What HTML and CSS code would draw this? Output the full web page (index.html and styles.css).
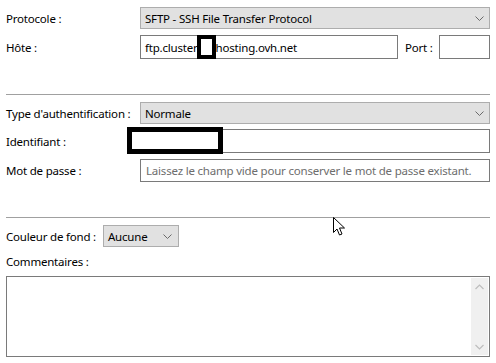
FILE: index.html
```html
<!DOCTYPE html>
<html lang="fr">

<head>
    <meta charset="UTF-8">
    <meta name="viewport" content="width=device-width, initial-scale=1.0">
    <title>Gestionnaire de Sites</title>
    <link rel="stylesheet" href="styles.css">
</head>

<body>
    <div class="panel">
        <div class="row row-proto">
            <span class="lbl">Protocole :</span>
            <div class="combo combo-wide">
                <span>SFTP - SSH File Transfer Protocol</span>
                <svg class="chev" width="9" height="5" viewBox="0 0 9 5"><path d="M0.5 0.5 L4.5 4.5 L8.5 0.5" fill="none" stroke="#6a6a6a" stroke-width="1"/></svg>
            </div>
        </div>
        <div class="row row-host">
            <span class="lbl">Hôte :</span>
            <div class="field host">ftp.cluster<span class="redact-small"></span>hosting.ovh.net</div>
            <span class="port-lbl">Port :</span>
            <div class="field port"></div>
        </div>

        <div class="sep sep-top"></div>

        <div class="row row-auth">
            <span class="lbl">Type d'authentification :</span>
            <div class="combo combo-wide">
                <span>Normale</span>
                <svg class="chev" width="9" height="5" viewBox="0 0 9 5"><path d="M0.5 0.5 L4.5 4.5 L8.5 0.5" fill="none" stroke="#6a6a6a" stroke-width="1"/></svg>
            </div>
        </div>
        <div class="row row-user">
            <span class="lbl">Identifiant :</span>
            <div class="field grow"></div>
            <div class="redact-big"></div>
        </div>
        <div class="row row-pass">
            <span class="lbl">Mot de passe :</span>
            <div class="field grow placeholder">Laissez le champ vide pour conserver le mot de passe existant.</div>
        </div>

        <div class="sep sep-bottom"></div>

        <div class="row row-color">
            <span class="lbl-short">Couleur de fond :</span>
            <div class="combo combo-small">
                <span>Aucune</span>
                <svg class="chev" width="9" height="5" viewBox="0 0 9 5"><path d="M0.5 0.5 L4.5 4.5 L8.5 0.5" fill="none" stroke="#6a6a6a" stroke-width="1"/></svg>
            </div>
        </div>
        <div class="comments-lbl">Commentaires :</div>
        <div class="comments">
            <div class="scrollbar">
                <svg width="9" height="6" viewBox="0 0 9 6"><path d="M0.5 5 L4.5 1 L8.5 5" fill="none" stroke="#bdbdbd" stroke-width="1.2"/></svg>
                <svg width="9" height="6" viewBox="0 0 9 6"><path d="M0.5 1 L4.5 5 L8.5 1" fill="none" stroke="#bdbdbd" stroke-width="1.2"/></svg>
            </div>
        </div>

        <svg class="cursor" width="13" height="20" viewBox="0 0 13 20"><path d="M0.5 0.5 L0.5 15.5 L4 12 L6.5 18 L9 17 L6.5 11 L11.5 11 Z" fill="#fff" stroke="#000" stroke-width="1"/></svg>
    </div>
</body>

</html>
```

FILE: styles.css
```css
html,
body {
    margin: 0;
    padding: 0;
    background: #fff;
}

body {
    font-family: "Noto Sans", "Open Sans", sans-serif;
    font-size: 11.5px;
    letter-spacing: -0.2px;
    color: #000;
    width: 496px;
    height: 363px;
    overflow: hidden;
}

.panel {
    position: relative;
    padding: 7px 6px 0 6px;
    width: 484px;
}

.row {
    display: flex;
    align-items: center;
}

.lbl {
    width: 134px;
    flex: none;
    white-space: nowrap;
}

.lbl-short {
    white-space: nowrap;
    margin-right: 7px;
}

.combo {
    box-sizing: border-box;
    height: 22px;
    background: #e1e1e1;
    border: 1px solid #adadad;
    display: flex;
    align-items: center;
    justify-content: space-between;
    padding: 0 5px 0 4px;
}

.combo-wide {
    flex: 1;
}

.combo-small {
    width: 76px;
    padding-right: 6px;
}

.field {
    box-sizing: border-box;
    height: 24px;
    border: 1px solid #7a7a7a;
    background: #fff;
    display: flex;
    align-items: center;
    padding: 0 4px;
    white-space: nowrap;
}

.grow {
    flex: 1;
}

.host {
    width: 258px;
}

.port-lbl {
    margin-left: 7px;
    width: 34px;
}

.port {
    width: 51px;
    margin-left: auto;
}

.placeholder {
    color: #6d6d6d;
    padding-left: 5px;
}

.row-host {
    margin-top: 6px;
}

.sep {
    height: 1px;
    background: #a0a0a0;
}

.sep-top {
    margin-top: 35px;
}

.row-auth {
    margin-top: 7px;
}

.row-user {
    position: relative;
    margin-top: 5px;
}

.row-pass {
    margin-top: 6px;
}

.row-pass .field {
    height: 23px;
}

.sep-bottom {
    margin-top: 35px;
}

.row-color {
    margin-top: 7px;
}

.comments-lbl {
    margin-top: 7px;
    height: 16px;
    line-height: 16px;
}

.comments {
    box-sizing: border-box;
    margin-top: 6px;
    height: 81px;
    border: 1px solid #7a7a7a;
    display: flex;
    justify-content: flex-end;
    padding: 1px;
}

.scrollbar {
    width: 17px;
    background: #f0f0f0;
    display: flex;
    flex-direction: column;
    align-items: center;
    justify-content: space-between;
    padding: 6px 0 5px 0;
}

.scrollbar svg {
    display: block;
}

/* masquage des données sensibles */
.redact-small {
    display: inline-block;
    box-sizing: border-box;
    width: 19px;
    height: 24px;
    border: 4px solid #000;
    background: #fff;
    vertical-align: middle;
    margin: 0 0 0 -1px;
}

.redact-big {
    position: absolute;
    left: 121px;
    top: -2px;
    width: 96px;
    height: 27px;
    box-sizing: border-box;
    border: 5px solid #000;
    background: #fff;
}

.cursor {
    position: absolute;
    left: 333px;
    top: 217px;
}
```
